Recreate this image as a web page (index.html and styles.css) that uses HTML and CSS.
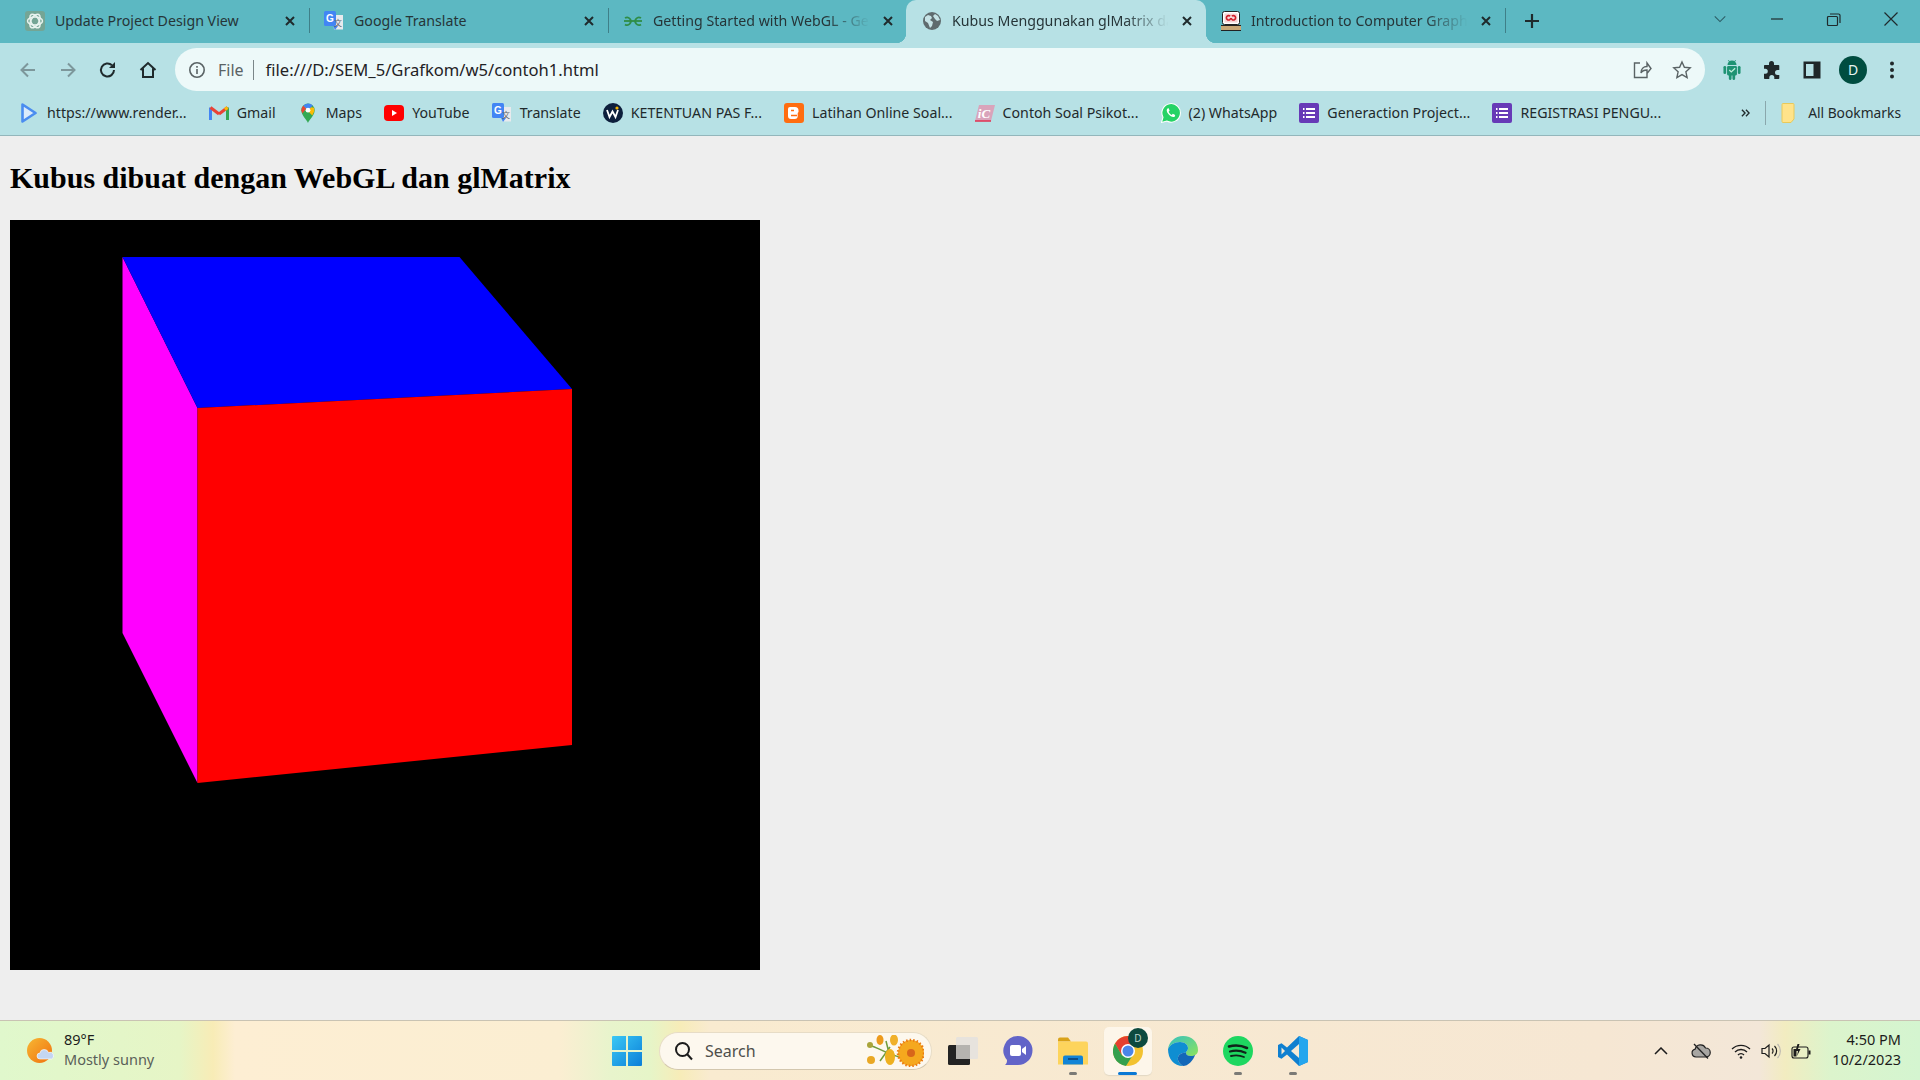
FILE: index.html
```html
<!DOCTYPE html>
<html lang="en">
<head>
<meta charset="utf-8">
<title>Kubus Menggunakan glMatrix dan WebGL</title>
<link rel="stylesheet" href="styles.css">
</head>
<body>
<header class="browser">
  <div class="tabbar">
    <div class="tab">
      <svg class="fav" viewBox="0 0 20 20"><rect width="20" height="20" rx="3" fill="#74a595"/><g fill="none" stroke="#e8f3ef" stroke-width="1.5"><ellipse cx="10" cy="10" rx="7.5" ry="4"/><ellipse cx="10" cy="10" rx="7.5" ry="4" transform="rotate(60 10 10)"/><ellipse cx="10" cy="10" rx="7.5" ry="4" transform="rotate(120 10 10)"/></g></svg>
      <span class="tab-title">Update Project Design View</span>
      <svg class="tab-x" viewBox="0 0 12 12"><path d="M2 2l8 8M10 2l-8 8"/></svg>
    </div>
    <i class="tab-sep"></i>
    <div class="tab">
      <svg class="fav" viewBox="0 0 20 20"><path d="M8 4h11v14.500H10z" fill="#e8eaed"/><path d="M9 15h5l-3 4z" fill="#4285f4"/><rect width="12" height="15" rx="1.500" fill="#4285f4"/><text x="6" y="11" class="gl-g">G</text><text x="14" y="14.500" class="gl-t">文</text></svg>
      <span class="tab-title">Google Translate</span>
      <svg class="tab-x" viewBox="0 0 12 12"><path d="M2 2l8 8M10 2l-8 8"/></svg>
    </div>
    <i class="tab-sep"></i>
    <div class="tab">
      <svg class="fav" viewBox="0 0 20 20"><g fill="none" stroke="#2f8d46" stroke-width="1.800"><path d="M1 10h18"/><path d="M2 7a3.800 3.800 0 1 1 0 6.500"/><path d="M18 7a3.800 3.800 0 1 0 0 6.500"/></g></svg>
      <span class="tab-title fade">Getting Started with WebGL - Ge</span>
      <svg class="tab-x" viewBox="0 0 12 12"><path d="M2 2l8 8M10 2l-8 8"/></svg>
    </div>
    <i class="tab-sep off"></i>
    <div class="tab active">
      <svg class="fav" viewBox="0 0 20 20"><circle cx="10" cy="10" r="9" fill="#5f6b6e"/><path d="M3 6l3-2 3 1 1 2-2 2 3 2-1 4-2 2-2-5-3-2zM13 3l3 2 2 4-3 1-2-2-2-3z" fill="#c6e3e6"/></svg>
      <span class="tab-title fade">Kubus Menggunakan glMatrix da</span>
      <svg class="tab-x" viewBox="0 0 12 12"><path d="M2 2l8 8M10 2l-8 8"/></svg>
    </div>
    <i class="tab-sep off"></i>
    <div class="tab">
      <svg class="fav" viewBox="0 0 20 20"><rect x="1.500" y="0.500" width="17" height="13" rx="2" fill="#fff" stroke="#222"/><rect x="3.500" y="2.500" width="13" height="9" fill="#f6d5d5"/><path d="M9.800 7a2.200 2.200 0 1 1-.7-1.800M10.200 7a2.200 2.200 0 1 0 .7-1.800" fill="none" stroke="#d01f2a" stroke-width="1.600"/><rect x="0" y="14" width="20" height="6" fill="#c9a877"/><rect x="0" y="14" width="20" height="1" fill="#222"/><rect x="0" y="19" width="20" height="1" fill="#222"/></svg>
      <span class="tab-title fade">Introduction to Computer Graph</span>
      <svg class="tab-x" viewBox="0 0 12 12"><path d="M2 2l8 8M10 2l-8 8"/></svg>
    </div>
    <i class="tab-sep"></i>
    <svg class="newtab" viewBox="0 0 16 16"><path d="M8 1v14M1 8h14"/></svg>
    <div class="winctl">
      <svg class="win-ico chev" viewBox="0 0 16 16"><path d="M2 5l6 6 6-6"/></svg>
      <svg class="win-ico" viewBox="0 0 16 16"><path d="M2 8h12"/></svg>
      <svg class="win-ico" viewBox="0 0 16 16"><path d="M2.500 5.500h8a1 1 0 0 1 1 1v7a1 1 0 0 1-1 1h-8a1 1 0 0 1-1-1v-7a1 1 0 0 1 1-1zM4 3h8.500a1.500 1.500 0 0 1 1.500 1.500V12"/></svg>
      <svg class="win-ico" viewBox="0 0 16 16"><path d="M1.500 1.500l13 13M14.500 1.500l-13 13"/></svg>
    </div>
  </div>

  <div class="toolbar">
    <div class="tbtn"><svg class="t-ico dim" viewBox="0 0 20 20"><path d="M17 10H4M10 3.500L3.500 10l6.500 6.500"/></svg></div>
    <div class="tbtn"><svg class="t-ico dim" viewBox="0 0 20 20"><path d="M3 10h13M10 3.500l6.500 6.500-6.500 6.500"/></svg></div>
    <div class="tbtn"><svg class="t-ico" viewBox="0 0 20 20"><path d="M16 10a6.500 6.500 0 1 1-2-4.700"/><path class="solid" d="M17 2v6h-6z"/></svg></div>
    <div class="tbtn"><svg class="t-ico" viewBox="0 0 20 20"><path d="M2.500 10L10 3l7.500 7M5 8.500V17h10V8.500"/></svg></div>
    <div class="omnibox">
      <svg class="o-info" viewBox="0 0 18 18"><circle cx="9" cy="9" r="7.200"/><path d="M9 8v5M9 5v1.800"/></svg>
      <span class="o-file">File</span>
      <i class="o-sep"></i>
      <span class="o-url">file:///D:/SEM_5/Grafkom/w5/contoh1.html</span>
      <svg class="o-ico" viewBox="0 0 20 20"><path d="M8 3H2.500v14.500H15V13M9 13c0-4 2.500-6.500 6-6.500V3l4 5.500-4 5V10c-2.500 0-5 1-6 3z"/></svg>
      <svg class="o-ico o-star" viewBox="0 0 20 20"><path d="M10 2l2.400 5.300 5.800.6-4.300 3.900 1.200 5.700L10 14.600l-5.100 2.900 1.200-5.700-4.300-3.900 5.800-.6z"/></svg>
    </div>
    <div class="tools">
      <div class="tbtn"><svg class="ext" viewBox="0 0 20 24"><path d="M5 6.500a5 5 0 0 1 10 0z" fill="#1e9373"/><path d="M6 1l2 3M14 1l-2 3" stroke="#1e9373"/><rect x="4.500" y="7.500" width="11" height="10.500" rx="1.500" fill="#1e9373"/><rect x="0.500" y="7.500" width="3" height="9" rx="1.500" fill="#1e9373"/><rect x="16.500" y="7.500" width="3" height="9" rx="1.500" fill="#1e9373"/><rect x="6.500" y="17" width="3" height="6" rx="1.200" fill="#1e9373"/><rect x="10.500" y="17" width="3" height="6" rx="1.200" fill="#1e9373"/><path d="M7 12l2.200 2.200L13.500 10" stroke="#bff0dc" stroke-width="1.400" fill="none"/></svg></div>
      <div class="tbtn"><svg class="pz" viewBox="0 0 20 20"><path d="M7 3.500a2.500 2.500 0 0 1 5 0V5h4.500a.8.8 0 0 1 .8.800V10h-1.800a2.500 2.500 0 0 0 0 5h1.800v3.200a.8.800 0 0 1-.8.800h-4.200v-1.600a2.500 2.500 0 0 0-5 0V19H2.800a.8.800 0 0 1-.8-.8v-4.400h1.300a2.500 2.500 0 0 0 0-5H2V5.800a.8.800 0 0 1 .8-.8H7z"/></svg></div>
      <div class="tbtn"><svg class="pz" viewBox="0 0 20 20"><path fill-rule="evenodd" d="M1.500 1.500h17v17h-17zM4 4v12h7.500V4z"/></svg></div>
      <div class="tbtn"><span class="avatar">D</span></div>
      <div class="tbtn"><svg class="pz" viewBox="0 0 20 20"><circle cx="10" cy="3.500" r="2"/><circle cx="10" cy="10" r="2"/><circle cx="10" cy="16.500" r="2"/></svg></div>
    </div>
  </div>

  <nav class="bookmarks">
    <div class="bm"><svg class="bi" viewBox="0 0 16 20"><path d="M1.500 1.500l13 8.500-13 8.500z" fill="#dcebfb" stroke="#4b8df0" stroke-width="2.600" stroke-linejoin="round"/></svg><span>https://www.render...</span></div>
    <div class="bm"><svg class="bi" viewBox="0 0 20 16"><path d="M1.500 15V2.500" stroke="#4285f4" stroke-width="3"/><path d="M18.500 15V2.500" stroke="#34a853" stroke-width="3"/><path d="M1.500 2.500L10 9" stroke="#ea4335" stroke-width="3"/><path d="M10 9l8.500-6.500" stroke="#ea4335" stroke-width="3"/><path d="M18.500 2.500L16 4.500" stroke="#fbbc04" stroke-width="3"/></svg><span>Gmail</span></div>
    <div class="bm"><svg class="bi" viewBox="0 0 15 21"><path d="M7.500 21c-1-3.500-7-8-7-13.500a7 7 0 0 1 14 0C14.500 13 8.500 17.500 7.500 21z" fill="#34a853"/><path d="M2 3L12 13l2-4V5z" fill="#fbbc04"/><path d="M2.500 3A7 7 0 0 1 12.500 2.500L7.500 8z" fill="#4285f4"/><path d="M.5 7.500a7 7 0 0 1 2-4.500l3 3-4 5z" fill="#ea4335"/><circle cx="7.500" cy="7.500" r="2.500" fill="#fff"/></svg><span>Maps</span></div>
    <div class="bm"><svg class="bi" viewBox="0 0 20 16"><rect width="20" height="16" rx="4" fill="#f00"/><path d="M8 5l5 3-5 3z" fill="#fff"/></svg><span>YouTube</span></div>
    <div class="bm"><svg class="bi" viewBox="0 0 20 20"><path d="M8 4h11v14.500H10z" fill="#e8eaed"/><path d="M9 15h5l-3 4z" fill="#4285f4"/><rect width="12" height="15" rx="1.500" fill="#4285f4"/><text x="6" y="11" class="gl-g">G</text><text x="14" y="14.500" class="gl-t">文</text></svg><span>Translate</span></div>
    <div class="bm"><svg class="bi" viewBox="0 0 20 20"><circle cx="10" cy="10" r="10" fill="#0d1f3c"/><circle cx="14" cy="5" r="1.600" fill="#f4b400"/><path d="M4 7l2.500 7 3-5.500 3 5.500L15 7" fill="none" stroke="#fff" stroke-width="1.800"/></svg><span>KETENTUAN PAS F...</span></div>
    <div class="bm"><svg class="bi" viewBox="0 0 20 20"><rect width="20" height="20" rx="3" fill="#ff6d10"/><path d="M6 4h5a3.500 3.500 0 0 1 3.500 3.500V9l-.8 1v3a3 3 0 0 1-3 3H7a3 3 0 0 1-3-3V6a2 2 0 0 1 2-2z" fill="#fff"/><path d="M7 7.500h3M7 12.500h6" stroke="#ff6d10" stroke-width="1.500"/></svg><span>Latihan Online Soal...</span></div>
    <div class="bm"><svg class="bi" viewBox="0 0 20 18"><path d="M4 1h16l-4 16H0z" fill="#d9a4bb"/><path d="M0 17h16" stroke="#e03050" stroke-width="1.500"/><text x="9" y="14" class="ic-t">iC</text></svg><span>Contoh Soal Psikot...</span></div>
    <div class="bm"><svg class="bi" viewBox="0.500 0.500 19 19"><path d="M1 19l1.400-5A8.800 8.800 0 1 1 6 17.600z" fill="#25d366" stroke="#fff" stroke-width="1"/><path d="M7 5.500c-1.500 1-1.500 3 .5 5.500s4.500 3.500 6 2.500l.5-1.500-2.300-1.200-1 1c-1-.3-2.500-1.800-3-3l1-1L7.800 5.500z" fill="#fff"/></svg><span>(2) WhatsApp</span></div>
    <div class="bm"><svg class="bi" viewBox="0 0 20 20"><rect width="20" height="20" rx="2" fill="#673ab7"/><path d="M7 6h9M7 10h9M7 14h9M4 6h1.500M4 10h1.500M4 14h1.500" stroke="#fff" stroke-width="2"/></svg><span>Generaction Project...</span></div>
    <div class="bm"><svg class="bi" viewBox="0 0 20 20"><rect width="20" height="20" rx="2" fill="#673ab7"/><path d="M7 6h9M7 10h9M7 14h9M4 6h1.500M4 10h1.500M4 14h1.500" stroke="#fff" stroke-width="2"/></svg><span>REGISTRASI PENGU...</span></div>
    <div class="bm-end">
      <svg class="more" viewBox="0 0 10 10"><path d="M1 1.500L4.500 5 1 8.500M5.500 1.500L9 5 5.500 8.500"/></svg>
      <i class="bm-sep"></i>
      <div class="bm all"><svg class="bf" viewBox="0 0 14 20"><path d="M1 1.500a1 1 0 0 1 1-1h10a1 1 0 0 1 1 1V16l-3 3.500H2a1 1 0 0 1-1-1z" fill="#ffe38a" stroke="#e8c95a"/></svg><span>All Bookmarks</span></div>
    </div>
  </nav>
</header>

<main class="page">
  <h2 class="title">Kubus dibuat dengan WebGL dan glMatrix</h2>
  <svg class="stage" viewBox="0 0 750 750" width="750" height="750">
    <polygon points="112.500,37 187.500,188 187.500,563 112.500,413" fill="#f0f"/>
    <polygon points="112.500,37 449.500,37 562,169 187.500,188" fill="#00f"/>
    <polygon points="187.500,188 562,169 562,525 187.500,563" fill="#f00"/>
  </svg>
</main>

<footer class="taskbar">
  <div class="weather">
    <svg class="w-ico" viewBox="0 0 28 26"><defs><linearGradient id="sun" x1="0" y1="0" x2="1" y2="1"><stop offset="0" stop-color="#f7b733"/><stop offset="1" stop-color="#f0700f"/></linearGradient></defs><circle cx="12.500" cy="12.500" r="12.500" fill="url(#sun)"/><path d="M13 21a3 3 0 0 1 0-6 4 4 0 0 1 4-3.500 4.500 4.500 0 0 1 4.500 3 3.300 3.300 0 0 1 3 6.500z" fill="#c4d6f2" stroke="#fff" stroke-width=".6"/></svg>
    <div class="w-text"><span class="w-temp">89°F</span><span class="w-desc">Mostly sunny</span></div>
  </div>

  <div class="dock">
    <svg class="start" viewBox="0 0 30 30"><defs><linearGradient id="wb" x1="0" y1="0" x2="1" y2="1"><stop offset="0" stop-color="#3ac8f5"/><stop offset="1" stop-color="#0b7fd8"/></linearGradient></defs><path d="M0 1a1 1 0 0 1 1-1h13v14H0zM16 0h13a1 1 0 0 1 1 1v13H16zM0 16h14v14H1a1 1 0 0 1-1-1zM16 16h14v13a1 1 0 0 1-1 1H16z" fill="url(#wb)"/></svg>
    <div class="search">
      <svg class="s-ico" viewBox="0 0 20 20"><circle cx="8.500" cy="8.500" r="6.500"/><path d="M13 13l5 5.500"/></svg>
      <span class="s-text">Search</span>
      <svg class="s-art" viewBox="0 0 58 32"><g stroke="#6f9a3c" stroke-width="1.500" fill="none"><path d="M2 10c10 2 20 10 32 12M14 26l10-14M20 6l2 8"/></g><circle cx="4" cy="10" r="3" fill="#a9a43a"/><ellipse cx="14" cy="5" rx="3.500" ry="5" fill="#ed9a1c"/><ellipse cx="28" cy="5" rx="4" ry="5.500" fill="#f0b02a"/><circle cx="5" cy="25" r="4" fill="#e9a825"/><ellipse cx="24" cy="22" rx="5" ry="8" fill="#eeb01f"/><circle cx="45" cy="18" r="13" fill="#f5a81e"/><circle cx="45" cy="18" r="13" fill="none" stroke="#ea7a12" stroke-width="2.500" stroke-dasharray="1.500 2"/><circle cx="45" cy="18" r="4" fill="#d8661a"/></svg>
    </div>
    <div class="apps">
      <div class="app"><svg class="a-ico" viewBox="0 0 30 28"><rect y="8" width="22" height="20" rx="1.500" fill="#232323"/><rect x="8" y="0" width="22" height="22" rx="1.500" fill="#e4e2de" opacity=".9"/><rect x="8" y="8" width="14" height="14" fill="#b5b3af"/></svg></div>
      <div class="app"><svg class="a-ico" viewBox="0 0 30 30"><path d="M15 0a14.500 14.500 0 0 1 0 29H2c1.500-1.500 2-2.500 2-5A14.500 14.500 0 0 1 15 0z" fill="#6264c8"/><rect x="7" y="9" width="11" height="11" rx="2" fill="#fff"/><path d="M19 13l4-3v9l-4-3z" fill="#fff"/></svg></div>
      <div class="app dot"><svg class="a-ico" viewBox="0 0 30 27"><path d="M0 2a2 2 0 0 1 2-2h8l3 4h-13z" fill="#d9a218"/><path d="M0 4h28a2 2 0 0 1 2 2v21H0z" fill="#fdd45c"/><path d="M5 27V20a2 2 0 0 1 2-2h16a2 2 0 0 1 2 2v7z" fill="#1284d6"/><path d="M10 21.500h10" stroke="#0a3d6e" stroke-width="1.500"/></svg></div>
      <div class="app active"><svg class="a-ico" viewBox="0 0 30 30"><circle cx="15" cy="15" r="15" fill="#f2c230"/><path d="M15 0A15 15 0 0 0 2 7.500L8.500 19 15 9h13A15 15 0 0 0 15 0z" fill="#e5402e"/><path d="M2 7.500A15 15 0 0 0 13 30l6.500-10.500H9z" fill="#34a04e"/><circle cx="15" cy="15" r="7" fill="#fff"/><circle cx="15" cy="15" r="5.500" fill="#4a86e8"/></svg><span class="badge">D</span></div>
      <div class="app"><svg class="a-ico" viewBox="0 0 30 30"><defs><linearGradient id="eg" x1="0" y1="0" x2="1" y2="1"><stop offset="0" stop-color="#35c1c0"/><stop offset="1" stop-color="#8de35c"/></linearGradient></defs><path d="M15 0c9 0 15 6 15 14 0 4-3 6-7 6-3 0-5-1-5-3 0-2 2-2 2-5 0-3-3-6-8-6C6 6 2 9 0 13 1 6 7 0 15 0z" fill="url(#eg)"/><path d="M0 13c2-4 6-7 12-7 5 0 8 3 8 6 0 3-2 3-2 5-4-1-9 2-8 7 .4 2 2 4 5 6C6 30 0 23 0 13z" fill="#0f8ed2"/><path d="M10 24c-1-5 4-8 8-7 0 2 2 3 5 3 2 0 3-.5 4-1-2 6-7 11-12 11-3-2-4.500-4-5-6z" fill="#1367b8"/></svg></div>
      <div class="app dot"><svg class="a-ico" viewBox="0 0 30 30"><circle cx="15" cy="15" r="15" fill="#1ed760"/><g fill="none" stroke="#10231a" stroke-linecap="round"><path d="M6 10.500c6-1.700 12-1.300 18 1.500" stroke-width="2.600"/><path d="M7 15.500c5-1.300 10.500-1 15.500 1.300" stroke-width="2.200"/><path d="M8 20c4.500-1 9-.7 13 1" stroke-width="1.800"/></g></svg></div>
      <div class="app dot"><svg class="a-ico" viewBox="0 0 30 30"><path d="M21 0l9 4v22l-9 4-12-11.500-5.500 4.200L0 21V9l3.500-1.700L9 11.500z" fill="#0f7fd0"/><path d="M21 0l9 4v22l-9 4z" fill="#25a6ee"/><path d="M21 8L13 15l8 7z" fill="#f4e9d6"/><path d="M3.500 11.500L7 15l-3.500 3.500z" fill="#f4e9d6"/></svg></div>
    </div>
  </div>

  <div class="tray">
    <svg class="tr-chev" viewBox="0 0 14 8"><path d="M1 7l6-6 6 6"/></svg>
    <svg class="tr-ico tr-cloud" viewBox="0 0 20 16"><path d="M5 14a4 4 0 0 1-.8-7.900A5.500 5.500 0 0 1 14.500 5a4.500 4.500 0 0 1 .5 9z" fill="#a8a6a2" stroke="#222" stroke-width="1.200"/><path d="M3 1l14 14.500" stroke="#222" stroke-width="1.300"/></svg>
    <svg class="tr-ico tr-wifi" viewBox="0 0 20 16"><g fill="none" stroke="#1c1c1c" stroke-width="1.300"><path d="M1 6a13 13 0 0 1 18 0"/><path d="M4 9a8.500 8.500 0 0 1 12 0"/><path d="M7 12a4 4 0 0 1 6 0"/></g><circle cx="10" cy="14.500" r="1.300" fill="#1c1c1c"/></svg>
    <svg class="tr-ico" viewBox="0 0 20 16"><path d="M1 5.500h3L8 2v12l-4-3.500H1z" fill="none" stroke="#1c1c1c" stroke-width="1.200"/><path d="M11 5.500a3.500 3.500 0 0 1 0 5M13.500 3a7 7 0 0 1 0 10" fill="none" stroke="#1c1c1c" stroke-width="1.200"/><path d="M16.500 1a10 10 0 0 1 0 14" fill="none" stroke="#bdb9b0" stroke-width="1.200"/></svg>
    <svg class="tr-ico" viewBox="0 0 20 16"><rect x="1" y="4" width="16" height="11" rx="2" fill="none" stroke="#1c1c1c" stroke-width="1.100"/><rect x="17.500" y="7.500" width="2" height="4" fill="#1c1c1c"/><path d="M2.500 6h3v7.500h-3z" fill="#1c1c1c"/><path d="M6.500 1L4.500 8H7l-1 5 3.500-7H7l1.500-5z" fill="#1c1c1c"/></svg>
    <div class="clock"><span>4:50 PM</span><span>10/2/2023</span></div>
  </div>
</footer>
</body>
</html>
```

FILE: styles.css
```css
* { box-sizing: border-box; }
html, body { margin: 0; height: 100%; }
body {
  display: flex;
  flex-direction: column;
  height: 1080px;
  overflow: hidden;
  background: #eeeeee;
  font-family: "Noto Sans", "Liberation Sans", sans-serif;
  color: #1f2a2c;
}
svg { display: block; flex: none; }

/* Tab strip */
.browser { flex: none; }
.tabbar {
  display: flex;
  align-items: center;
  height: 43px;
  padding-left: 11px;
  background: #5cb8c2;
}
.tab {
  position: relative;
  display: flex;
  align-items: center;
  flex: none;
  width: 298px;
  height: 43px;
  padding: 0 9px 2px 14px;
  font-size: 14.200px;
}
.tab.active {
  width: 300px;
  margin-left: -2px;
  padding-left: 16px;
  background: #b7e1e5;
  border-radius: 10px 10px 0 0;
}
.tab.active::before, .tab.active::after {
  content: "";
  position: absolute;
  bottom: 0;
  width: 10px;
  height: 10px;
}
.tab.active::before { left: -10px; background: radial-gradient(circle at 0 0, transparent 10px, #b7e1e5 10.500px); }
.tab.active::after { right: -10px; background: radial-gradient(circle at 100% 0, transparent 10px, #b7e1e5 10.500px); }
.fav { width: 20px; height: 20px; }
.tab-title {
  flex: 1;
  min-width: 0;
  margin: 0 4px 0 10px;
  white-space: nowrap;
  color: #263538;
}
.tab-title.fade {
  -webkit-mask-image: linear-gradient(90deg, #000 78%, transparent 98%);
  mask-image: linear-gradient(90deg, #000 78%, transparent 98%);
}
.tab-x { width: 20px; height: 12px; fill: none; stroke: #1f2a2c; stroke-width: 2; }
.tab-sep { flex: none; width: 1px; height: 25px; margin-bottom: 2px; background: #3f7f88; }
.tab-sep.off { background: transparent; }
.newtab { width: 16px; height: 16px; margin: 0 0 2px 18px; fill: none; stroke: #1f2a2c; stroke-width: 2.200; }
.winctl { display: flex; align-items: center; margin-left: auto; padding: 0 21px 6px 0; gap: 41px; height: 100%; }
.win-ico { width: 16px; height: 16px; fill: none; stroke: #1f2a2c; stroke-width: 1.200; }
.win-ico.chev { width: 14px; stroke: #2c5c64; margin-right: 1px; }

/* Toolbar */
.toolbar {
  display: flex;
  align-items: center;
  height: 48px;
  padding: 5px 8px 0;
  background: #b7e1e5;
}
.tbtn { display: flex; align-items: center; justify-content: center; flex: none; width: 40px; height: 43px; }
.t-ico { width: 20px; height: 20px; fill: none; stroke: #1f2a2c; stroke-width: 2; }
.t-ico.dim { stroke: #7d979b; }
.t-ico .solid { fill: #1f2a2c; stroke: none; }
.omnibox {
  display: flex;
  align-items: center;
  flex: none;
  width: 1530px;
  height: 43px;
  margin-left: 7px;
  padding: 0 13px;
  background: #edf9f9;
  border-radius: 22px;
}
.o-info { width: 18px; height: 18px; fill: none; stroke: #5a6365; stroke-width: 1.600; }
.o-file { margin-left: 12px; font-size: 16px; color: #5a6365; }
.o-sep { width: 1px; height: 20px; margin: 0 12px 0 9px; background: #7a8689; }
.o-url { flex: 1; font-size: 16.600px; color: #1f2225; }
.o-ico { width: 20px; height: 20px; margin-left: 19px; fill: none; stroke: #5a6365; stroke-width: 1.400; }
.o-star { margin-left: 20px; }
.tools { display: flex; margin-left: 7px; }
.ext { width: 18px; height: 24px; }
.pz { width: 20px; height: 20px; fill: #20282a; }
.avatar {
  display: flex;
  align-items: center;
  justify-content: center;
  width: 28px;
  height: 28px;
  margin-left: 2px;
  border-radius: 50%;
  background: #004d40;
  color: #e6f5f0;
  font-size: 14px;
}

/* Bookmarks */
.bookmarks {
  display: flex;
  align-items: center;
  height: 45px;
  padding: 0 19px 1px 19px;
  gap: 22.100px;
  background: #b7e1e5;
  border-bottom: 1px solid #93b6bb;
  font-size: 14.200px;
  white-space: nowrap;
}
.bm { display: flex; align-items: center; gap: 8px; flex: none; }
.bi { width: 20px; height: 20px; }
.bm-end { display: flex; align-items: center; margin-left: auto; }
.more { width: 9px; height: 10px; fill: none; stroke: #1f2a2c; stroke-width: 1.500; }
.bm-sep { width: 1px; height: 24px; margin: 0 15px; background: #8aa7ac; }
.bf { width: 14px; height: 20px; }
.all { gap: 13px; font-size: 13.800px; }
.gl-g { font: 700 10px "Liberation Sans", sans-serif; fill: #fff; text-anchor: middle; }
.gl-t { font: 8px "Noto Sans CJK SC", sans-serif; fill: #5f6368; text-anchor: middle; }
.ic-t { font: italic 700 13px "Liberation Serif", serif; fill: #fff; text-anchor: middle; }

/* Page */
.page { flex: 1; min-height: 0; padding: 0 10px; }
.title {
  margin: 25px 0;
  font: 700 30px/34px "Liberation Serif", serif;
  color: #000;
}
.stage { background: #000; }

/* Taskbar */
.taskbar {
  display: flex;
  align-items: center;
  flex: none;
  height: 60px;
  border-top: 1px solid #c9c3b3;
  background: linear-gradient(90deg, #e0f8cc 0, #e6f5c6 180px, #f8ecb6 213px, #fdeed3 235px, #fbeed2 560px, #e8f4cc 610px, #e6f5c8 650px, #f7ecb8 680px, #f9ebd0 710px, #f6e7d3 1600px, #f3e7d8 1760px, #f2ecc0 1785px, #dcf4cc 1830px, #d4f5d0 100%);
}
.weather { display: flex; align-items: center; flex: none; width: 612px; padding-left: 27px; gap: 9px; }
.w-ico { width: 28px; height: 26px; }
.w-text { display: flex; flex-direction: column; margin-top: -3px; font-size: 14.500px; line-height: 20px; }
.w-temp { color: #1c1c1c; }
.w-desc { color: #5a5f58; }
.dock { display: flex; align-items: center; flex: none; }
.start { width: 30px; height: 30px; }
.search {
  display: flex;
  align-items: center;
  width: 273px;
  height: 38px;
  margin-left: 17px;
  padding: 0 7px 0 14px;
  background: #fdf8ee;
  border: 1px solid #e7dcc6;
  border-bottom-color: #d3c7ae;
  border-radius: 19px;
}
.s-ico { width: 20px; height: 20px; fill: none; stroke: #1c1c1c; stroke-width: 2; }
.s-text { flex: 1; margin-left: 11px; font-size: 16px; color: #4f4f4b; }
.s-art { width: 58px; height: 32px; }
.apps { display: flex; align-items: center; margin-left: 7px; gap: 7px; }
.app {
  position: relative;
  display: flex;
  align-items: center;
  justify-content: center;
  width: 48px;
  height: 48px;
  border-radius: 5px;
}
.a-ico { width: 30px; height: 30px; }
.app.active { background: #fdf6ea; box-shadow: 0 1px 1px #e2d8c4; }
.app.dot::after, .app.active::after {
  content: "";
  position: absolute;
  bottom: 0;
  left: 50%;
  width: 8px;
  height: 3px;
  margin-left: -4px;
  border-radius: 2px;
  background: #7b7a76;
}
.app.active::after { width: 19px; margin-left: -10px; background: #0a78d4; }
.badge {
  position: absolute;
  top: 1px;
  right: 4px;
  display: flex;
  align-items: center;
  justify-content: center;
  width: 20px;
  height: 20px;
  border-radius: 50%;
  background: #0d4a3e;
  color: #b9d5cb;
  font-size: 10px;
}
.tray { display: flex; align-items: center; flex: none; margin-left: auto; padding-right: 19px; }
.tr-chev { width: 14px; height: 8px; fill: none; stroke: #1c1c1c; stroke-width: 1.500; }
.tr-ico { width: 20px; height: 16px; margin-left: 10px; }
.tr-cloud { margin-left: 23px; }
.tr-wifi { margin-left: 20px; }
.clock {
  display: flex;
  flex-direction: column;
  align-items: flex-end;
  width: 90px;
  margin-top: -3px;
  font-size: 14.500px;
  line-height: 20px;
  color: #1c1c1c;
}
```
